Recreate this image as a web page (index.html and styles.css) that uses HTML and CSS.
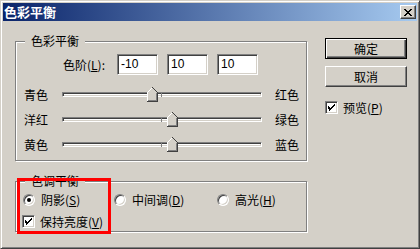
FILE: index.html
```html
<!DOCTYPE html>
<html>
<head>
<meta charset="utf-8">
<link rel="stylesheet" href="styles.css">
</head>
<body>
<div class="window">
  <div class="titlebar">
    <span class="title">色彩平衡</span>
    <span class="close"><svg width="8" height="7" viewBox="0 0 8 7" shape-rendering="crispEdges"><path d="M0 0h2v1h1v1h2v-1h1v-1h2v1h-1v1h-1v1h-1v1h1v1h1v1h1v1h-2v-1h-1v-1h-2v1h-1v1h-2v-1h1v-1h1v-1h1v-1h-1v-1h-1v-1h-1z" fill="#000"/></svg></span>
  </div>
  <div class="content">
    <div class="left">
      <div class="group g1">
        <div class="legend">色彩平衡</div>
        <div class="levels">
          <span class="lvl-label">色阶(<u>L</u>):</span>
          <div class="input">-10</div>
          <div class="input">10</div>
          <div class="input">10</div>
        </div>
        <div class="slider-row">
          <span class="sl-left">青色</span>
          <div class="track"><span class="mid"></span>
            <svg class="thumb" style="left:84px" width="11" height="15" viewBox="0 0 11 15" shape-rendering="crispEdges"><polygon points="5,0 10,5 10,14 0,14 0,5" fill="#d4d0c8"/><path d="M0.5 14V5.5L5.5 0.5" stroke="#fff" fill="none"/><path d="M5.5 0.5L10.5 5.5V14.5H0" stroke="#404040" fill="none"/><path d="M9.5 6V13.5H1" stroke="#808080" fill="none"/></svg>
          </div>
          <span class="sl-right">红色</span>
        </div>
        <div class="slider-row">
          <span class="sl-left">洋红</span>
          <div class="track"><span class="mid"></span>
            <svg class="thumb" style="left:104px" width="11" height="15" viewBox="0 0 11 15" shape-rendering="crispEdges"><polygon points="5,0 10,5 10,14 0,14 0,5" fill="#d4d0c8"/><path d="M0.5 14V5.5L5.5 0.5" stroke="#fff" fill="none"/><path d="M5.5 0.5L10.5 5.5V14.5H0" stroke="#404040" fill="none"/><path d="M9.5 6V13.5H1" stroke="#808080" fill="none"/></svg>
          </div>
          <span class="sl-right">绿色</span>
        </div>
        <div class="slider-row">
          <span class="sl-left">黄色</span>
          <div class="track"><span class="mid"></span>
            <svg class="thumb" style="left:104px" width="11" height="15" viewBox="0 0 11 15" shape-rendering="crispEdges"><polygon points="5,0 10,5 10,14 0,14 0,5" fill="#d4d0c8"/><path d="M0.5 14V5.5L5.5 0.5" stroke="#fff" fill="none"/><path d="M5.5 0.5L10.5 5.5V14.5H0" stroke="#404040" fill="none"/><path d="M9.5 6V13.5H1" stroke="#808080" fill="none"/></svg>
          </div>
          <span class="sl-right">蓝色</span>
        </div>
      </div>
      <div class="group g2">
        <div class="legend">色调平衡</div>
        <div class="radios">
          <div class="opt"><span class="radio on"></span>阴影(<u>S</u>)</div>
          <div class="opt"><span class="radio"></span>中间调(<u>D</u>)</div>
          <div class="opt"><span class="radio"></span>高光(<u>H</u>)</div>
        </div>
        <div class="opt keep"><span class="check"><svg width="7" height="7" viewBox="0 0 7 7" shape-rendering="crispEdges"><path d="M6 0h1v1h-1v1h-1v1h-1v1h-1v1h-1v1h-1v-1h-1v-3h1v1h1v1h1v-1h1v-1h1v-1h1z" fill="#000"/><path d="M6 1h1v1h-1v1h-1v1h-1v1h-1v1h-1v1h-1v-1h1v-1h1v-1h1v-1h1v-1h1z" fill="#000"/></svg></span>保持亮度(<u>V</u>)</div>
      </div>
    </div>
    <div class="right">
      <div class="btn default">确定</div>
      <div class="btn">取消</div>
      <div class="opt preview"><span class="check"><svg width="7" height="7" viewBox="0 0 7 7" shape-rendering="crispEdges"><path d="M6 0h1v1h-1v1h-1v1h-1v1h-1v1h-1v1h-1v-1h-1v-3h1v1h1v1h1v-1h1v-1h1v-1h1z" fill="#000"/><path d="M6 1h1v1h-1v1h-1v1h-1v1h-1v1h-1v1h-1v-1h1v-1h1v-1h1v-1h1v-1h1z" fill="#000"/></svg></span>预览(<u>P</u>)</div>
    </div>
  </div>
  <div class="redbox"></div>
</div>
</body>
</html>
```

FILE: styles.css
```css
* { box-sizing: border-box; }
html, body { margin: 0; padding: 0; background: #d4d0c8; }
body {
  font-family: "Noto Sans CJK SC", "Liberation Sans", sans-serif;
  font-size: 12px;
  color: #000;
}
.window {
  position: relative;
  width: 420px;
  height: 249px;
  padding: 2px;
  background: #d4d0c8;
  border: 1px solid;
  border-color: #d4d0c8 #404040 #404040 #d4d0c8;
  box-shadow: inset 1px 1px 0 #fff, inset -1px -1px 0 #808080;
}
.titlebar {
  height: 18px;
  display: flex;
  align-items: center;
  justify-content: space-between;
  padding: 0 1px 0 1px;
  background: linear-gradient(to right, #0a246a, #a6caf0);
}
.title {
  color: #fff;
  font-weight: bold;
  font-size: 13px;
  line-height: 18px;
  padding-left: 0;
}
.close {
  width: 16px;
  height: 14px;
  display: flex;
  align-items: center;
  justify-content: center;
  background: #d4d0c8;
  border: 1px solid;
  border-color: #fff #404040 #404040 #fff;
  box-shadow: inset -1px -1px 0 #808080;
}
.content {
  display: flex;
}
.left {
  margin-left: 12px;
  padding-top: 20px;
  width: 292px;
}
.right {
  margin-left: 18px;
  padding-top: 17px;
  width: 82px;
}
.group {
  width: 292px;
  border: 1px solid #808080;
  box-shadow: 1px 1px 0 #fff, inset 1px 1px 0 #fff;
}
.g1 { height: 120px; }
.g2 { height: 51px; margin-top: 20px; }
.legend {
  display: table;
  margin: -8px 0 0 9px;
  padding: 0 6px;
  line-height: 14px;
  height: 14px;
  background: #d4d0c8;
}
.levels {
  display: flex;
  align-items: center;
  margin-top: 6px;
  padding-left: 47px;
  height: 21px;
}
.lvl-label {
  width: 54px;
  white-space: nowrap;
  line-height: 14px;
}
.input {
  width: 41px;
  height: 21px;
  margin-right: 9px;
  padding: 2px 0 0 3px;
  background: #fff;
  border: 1px solid;
  border-color: #808080 #fff #fff #808080;
  box-shadow: inset 1px 1px 0 #404040, inset -1px -1px 0 #d4d0c8;
  font-family: "Liberation Sans", sans-serif;
  font-size: 12px;
  line-height: 15px;
}
.slider-row {
  display: flex;
  align-items: center;
  height: 15px;
  margin-top: 10px;
  padding-left: 8px;
}
.levels + .slider-row { margin-top: 12px; }
.sl-left { width: 38px; line-height: 14px; }
.sl-right { margin-left: 13px; line-height: 14px; }
.track {
  position: relative;
  width: 200px;
  height: 5px;
  border: 1px solid;
  border-color: #808080 #fff #fff #808080;
  box-shadow: inset 1px 1px 0 #404040, inset -1px -1px 0 #d4d0c8;
  background: #fff;
}
.mid {
  position: absolute;
  left: 98px;
  top: -1px;
  width: 1px;
  height: 5px;
  background: #808080;
}
.thumb {
  position: absolute;
  top: -6px;
  display: block;
}
.opt {
  display: flex;
  align-items: center;
  height: 13px;
  line-height: 14px;
  white-space: nowrap;
}
.radios {
  display: grid;
  grid-template-columns: 91px 103px auto;
  margin-top: 5px;
  margin-left: 7px;
}
.keep { margin-top: 9px; margin-left: 6px; }
.radio {
  width: 12px;
  height: 12px;
  margin-right: 6px;
  border-radius: 50%;
  background: #fff;
  border: 1px solid;
  border-color: #808080 #fff #fff #808080;
  box-shadow: inset 1px 1px 0 #404040, inset -1px -1px 0 #d4d0c8;
  display: flex;
  align-items: center;
  justify-content: center;
}
.radio.on::after {
  content: "";
  width: 4px;
  height: 4px;
  border-radius: 50%;
  background: #000;
}
.check {
  width: 13px;
  height: 13px;
  margin-right: 5px;
  flex: none;
  background: #fff;
  border: 1px solid;
  border-color: #808080 #fff #fff #808080;
  box-shadow: inset 1px 1px 0 #404040, inset -1px -1px 0 #d4d0c8;
  display: flex;
  align-items: center;
  justify-content: center;
}
.btn {
  width: 82px;
  height: 21px;
  display: flex;
  align-items: center;
  justify-content: center;
  border: 1px solid;
  border-color: #fff #404040 #404040 #fff;
  box-shadow: inset -1px -1px 0 #808080;
  line-height: 14px;
}
.btn + .btn { margin-top: 7px; }
.btn.default {
  border: 1px solid #000;
  box-shadow: inset 1px 1px 0 #fff, inset -1px -1px 0 #404040, inset -2px -2px 0 #808080;
}
.preview { margin-top: 14px; }
.redbox {
  position: absolute;
  left: 16px;
  top: 177px;
  width: 94px;
  height: 56px;
  border: 3px solid #f00;
}
```
